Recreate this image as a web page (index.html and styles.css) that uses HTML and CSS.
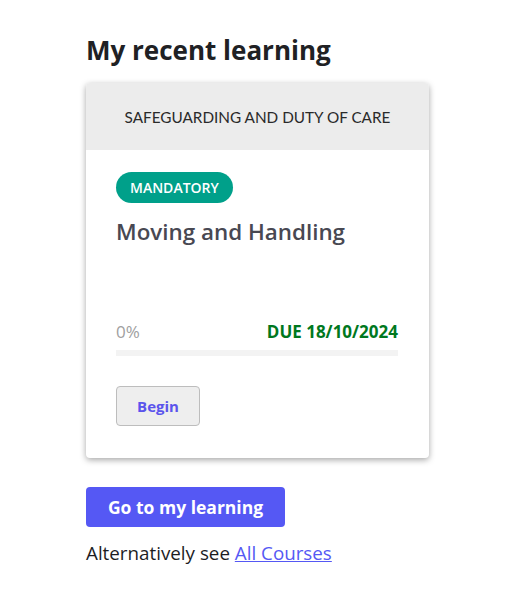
FILE: index.html
```html
<!DOCTYPE html>
<html lang="en">
<head>
<meta charset="utf-8">
<link rel="stylesheet" href="styles.css">
</head>
<body>
<main class="page">
  <h2 class="title">My recent learning</h2>
  <div class="card">
    <div class="card-head">SAFEGUARDING AND DUTY OF CARE</div>
    <div class="card-body">
      <span class="badge">MANDATORY</span>
      <h3 class="course">Moving and Handling</h3>
      <div class="meta">
        <span class="pct">0%</span>
        <span class="due">DUE 18/10/2024</span>
      </div>
      <div class="bar"><div class="bar-fill" style="width:0%"></div></div>
      <button class="begin">Begin</button>
    </div>
  </div>
  <a class="cta" href="#">Go to my learning</a>
  <p class="alt">Alternatively see <a href="#">All Courses</a></p>
</main>
</body>
</html>
```
FILE: styles.css
```css
* { box-sizing: border-box; }
body {
  margin: 0;
  background: #fff;
  font-family: "Open Sans", "Noto Sans", sans-serif;
  color: #1d1d1f;
}
.page {
  padding: 34px 0 0 86px;
  display: flex;
  flex-direction: column;
  align-items: flex-start;
}
.title {
  margin: 0 0 16px;
  font-size: 26px;
  font-weight: 700;
  line-height: 33px;
  color: #202124;
}
.card {
  width: 343px;
  background: #fff;
  border-radius: 4px;
  box-shadow: 0 2px 6px rgba(0,0,0,0.35);
  overflow: hidden;
}
.card-head {
  height: 67px;
  background: #ececec;
  display: flex;
  align-items: center;
  justify-content: center;
  font-family: Lato, "Noto Sans", sans-serif;
  font-size: 15.3px;
  color: #2a2a2a;
}
.card-body {
  padding: 22px 31px 32px 30px;
  display: flex;
  flex-direction: column;
  align-items: flex-start;
}
.badge {
  height: 31px;
  padding: 0 14px;
  border-radius: 16px;
  background: #00a08a;
  color: #fff;
  font-size: 14px;
  font-weight: 600;
  display: flex;
  align-items: center;
}
.course {
  margin: 14px 0 0;
  font-size: 22.4px;
  font-weight: 600;
  line-height: 30px;
  color: #484852;
}
.meta {
  margin-top: 74px;
  width: 100%;
  display: flex;
  justify-content: space-between;
  align-items: baseline;
  font-size: 17px;
  line-height: 22px;
}
.pct { color: #a0a0a0; }
.due { color: #00781e; font-weight: 700; }
.bar {
  margin-top: 7px;
  width: 100%;
  height: 6px;
  background: #f3f3f3;
}
.bar-fill { height: 100%; background: #00a08a; }
.begin {
  margin-top: 30px;
  width: 84px;
  height: 40px;
  background: #eeeeee;
  border: 1px solid #bdbdbd;
  border-radius: 4px;
  font-family: "Open Sans", "Noto Sans", sans-serif;
  font-size: 15px;
  font-weight: 700;
  color: #5b54ec;
}
.cta {
  margin-top: 29px;
  width: 199px;
  height: 40px;
  border-radius: 4px;
  background: #5558f4;
  color: #fff;
  text-decoration: none;
  font-size: 17.5px;
  font-weight: 700;
  display: flex;
  align-items: center;
  justify-content: center;
}
.alt {
  margin: 14px 0 0;
  font-size: 18.8px;
  line-height: 24px;
  color: #1d1d1f;
}
.alt a { color: #5558f4; }
```
